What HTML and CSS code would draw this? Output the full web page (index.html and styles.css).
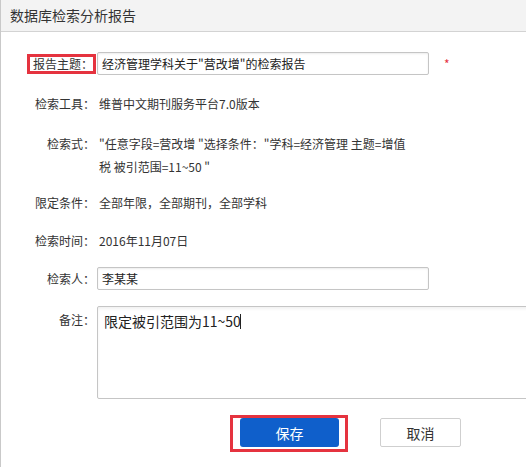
FILE: index.html
```html
<!DOCTYPE html>
<html lang="zh-CN">
<head>
<meta charset="utf-8">
<title>数据库检索分析报告</title>
<link rel="stylesheet" href="styles.css">
</head>
<body>
<div class="panel">
  <div class="header">数据库检索分析报告</div>
  <form class="form">
    <div class="row row-title">
      <label class="label"><span class="mark">报告主题：</span></label>
      <div class="field">
        <input class="input" type="text" value="经济管理学科关于&quot;营改增&quot;的检索报告">
        <span class="req">*</span>
      </div>
    </div>
    <div class="row row-tool">
      <span class="label">检索工具：</span>
      <span class="value">维普中文期刊服务平台7.0版本</span>
    </div>
    <div class="row row-expr">
      <span class="label">检索式：</span>
      <span class="value">"任意字段=营改增 "选择条件："学科=经济管理 主题=增值<br>税 被引范围=11~50 "</span>
    </div>
    <div class="row row-limit">
      <span class="label">限定条件：</span>
      <span class="value">全部年限，全部期刊，全部学科</span>
    </div>
    <div class="row row-time">
      <span class="label">检索时间：</span>
      <span class="value">2016年11月07日</span>
    </div>
    <div class="row row-person">
      <label class="label">检索人：</label>
      <div class="field">
        <input class="input" type="text" value="李某某">
      </div>
    </div>
    <div class="row row-note">
      <label class="label">备注：</label>
      <div class="field">
        <textarea class="textarea">限定被引范围为11~50</textarea><span class="caret"></span>
      </div>
    </div>
    <div class="actions">
      <span class="save-mark"><button type="button" class="btn btn-save">保存</button></span>
      <button type="button" class="btn btn-cancel">取消</button>
    </div>
  </form>
</div>
</body>
</html>
```
FILE: styles.css
```css
html, body {
  margin: 0;
  padding: 0;
  background: #fff;
}
body {
  width: 526px;
  height: 467px;
  overflow: hidden;
  font-family: "Noto Sans CJK SC", "Liberation Sans", sans-serif;
  font-size: 12px;
  color: #333;
}
.panel {
  height: 467px;
  border-left: 1px solid #c9c9c9;
  box-sizing: border-box;
}
.header {
  height: 31px;
  line-height: 30px;
  padding-left: 9px;
  font-size: 14px;
  color: #333;
  background: #f3f3f3;
  border-bottom: 1px solid #d3d3d3;
}
.form {
  display: flex;
  flex-direction: column;
  padding-top: 20px;
}
.row {
  display: flex;
  align-items: flex-start;
}
.label {
  width: 94px;
  flex: none;
  text-align: right;
  line-height: 23px;
  white-space: nowrap;
}
.value {
  padding-left: 4px;
  line-height: 23px;
  white-space: nowrap;
}
.field {
  position: relative;
  display: flex;
  align-items: center;
  padding-left: 2px;
}
.mark {
  display: inline-block;
  border: 3px solid #e5333f;
  line-height: 14px;
  padding: 0 0 0 3px;
  margin-top: -1px;
  margin-right: -1px;
}
.input {
  box-sizing: border-box;
  width: 332px;
  height: 23px;
  margin: 0;
  padding: 0 4px;
  border: 1px solid #c5c5c5;
  border-radius: 2px;
  box-shadow: inset 0 1px 2px rgba(0, 0, 0, 0.08);
  font-family: inherit;
  font-size: 12px;
  color: #222;
  outline: none;
}
.req {
  margin-left: 15px;
  color: #e5333f;
  font-size: 12px;
}
.textarea {
  box-sizing: border-box;
  width: 450px;
  height: 93px;
  margin: 0;
  padding: 4px 6px;
  border: 1px solid #c5c5c5;
  border-radius: 2px;
  box-shadow: inset 0 2px 3px rgba(0, 0, 0, 0.06);
  font-family: inherit;
  font-size: 14px;
  line-height: 20px;
  color: #222;
  resize: none;
  outline: none;
  display: block;
}
.field .caret {
  position: absolute;
  left: 145px;
  top: 8px;
  width: 1px;
  height: 15px;
  background: #222;
}
.row-tool { margin-top: 17px; }
.row-expr { margin-top: 17px; }
.row-limit { margin-top: 13px; }
.row-time { margin-top: 15px; }
.row-person { margin-top: 15px; }
.row-note { margin-top: 16px; }
.row-note .label { line-height: 28px; }
.actions {
  display: flex;
  align-items: flex-start;
  margin-top: 16px;
  padding-left: 229px;
}
.save-mark {
  display: inline-flex;
  border: 3px solid #e5333f;
  padding: 0 6px 2px 7px;
}
.btn {
  font-family: inherit;
  font-size: 14px;
  margin: 0;
  cursor: pointer;
}
.btn-save {
  width: 99px;
  height: 29px;
  border: none;
  border-radius: 3px;
  background: #0f5fcb;
  color: #fff;
}
.btn-cancel {
  width: 81px;
  height: 29px;
  margin-top: 3px;
  margin-left: 32px;
  border: 1px solid #cfcfcf;
  border-radius: 2px;
  background: #fff;
  color: #333;
}
```
